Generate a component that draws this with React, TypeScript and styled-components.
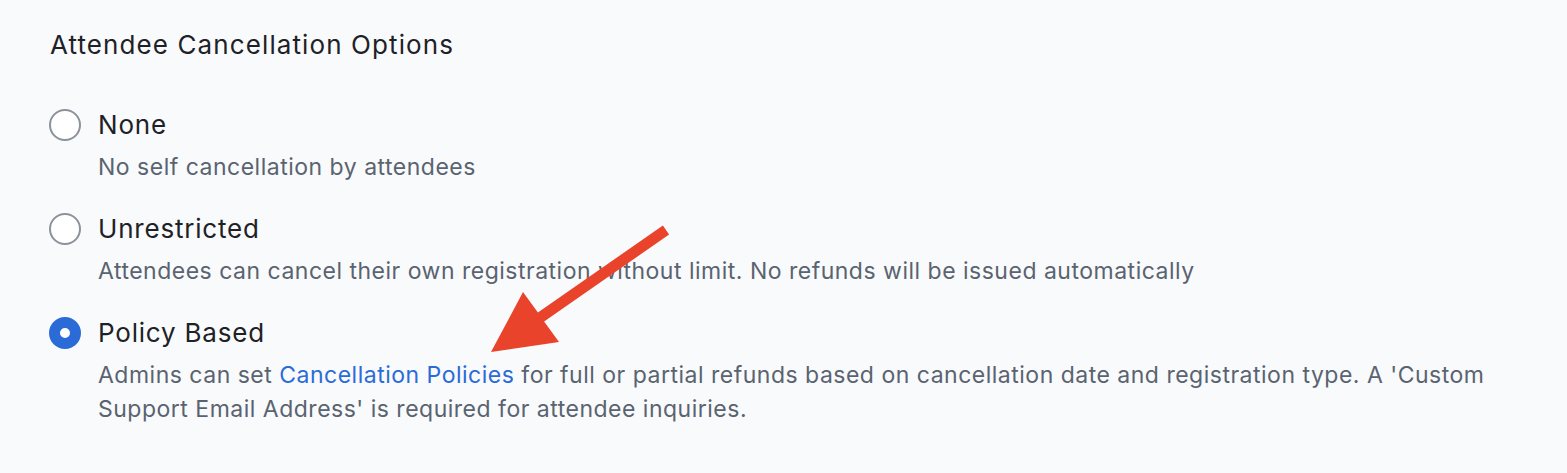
import styled, { createGlobalStyle } from 'styled-components';

const GlobalStyle = createGlobalStyle`
  html, body {
    margin: 0;
    padding: 0;
    background: #f9fafc;
  }
  body {
    font-family: Inter, "Noto Sans", "Liberation Sans", sans-serif;
    -webkit-font-smoothing: antialiased;
  }
`;

const StyledPage = styled.div`
  position: relative;
  width: 1567px;
  height: 473px;
  box-sizing: border-box;
  padding: 29px 50px 0 49px;
  background: #f9fafc;
  overflow: hidden;
`;

const StyledTitle = styled.h2`
  margin: 0 0 0 1px;
  font-size: 26px;
  font-weight: 400;
  line-height: 32px;
  letter-spacing: 1.1px;
  color: #1e2227;
`;

const StyledOptionList = styled.div`
  display: flex;
  flex-direction: column;
  gap: 29px;
  margin-top: 48px;
`;

const StyledOption = styled.label`
  display: grid;
  grid-template-columns: 32px 1fr;
  column-gap: 17px;
  row-gap: 9px;
  align-items: center;
  cursor: pointer;
`;

const StyledRadio = styled.span<{ checked: boolean }>`
  width: 32px;
  height: 32px;
  box-sizing: border-box;
  border-radius: 50%;
  background: #ffffff;
  border: ${({ checked }) => (checked ? '11px solid #2b6bd8' : '2px solid #8c929b')};
`;

const StyledLabel = styled.span`
  font-size: 26px;
  line-height: 32px;
  letter-spacing: 0.8px;
  color: #1e2227;
`;

const StyledDescription = styled.p`
  grid-column: 2;
  margin: 0;
  max-width: 1400px;
  font-size: 23px;
  line-height: 34px;
  letter-spacing: 0.5px;
  color: #5a6370;
`;

const StyledLink = styled.a`
  color: #2b6bd8;
  text-decoration: none;
`;

const StyledArrow = styled.svg`
  position: absolute;
  left: 0;
  top: 0;
  pointer-events: none;
`;

interface OptionProps {
  label: string;
  checked?: boolean;
  children: React.ReactNode;
}

function Option(props: OptionProps): JSX.Element {
  const { label, checked = false, children } = props;
  return (
    <StyledOption>
      <StyledRadio checked={checked} />
      <StyledLabel>{label}</StyledLabel>
      <StyledDescription>{children}</StyledDescription>
    </StyledOption>
  );
}

export default function App(): JSX.Element {
  return (
    <StyledPage>
      <GlobalStyle />
      <StyledTitle>Attendee Cancellation Options</StyledTitle>
      <StyledOptionList>
        <Option label="None">No self cancellation by attendees</Option>
        <Option label="Unrestricted">
          Attendees can cancel their own registration without limit. No refunds will be issued
          automatically
        </Option>
        <Option label="Policy Based" checked>
          Admins can set <StyledLink href="#">Cancellation Policies</StyledLink> for full or
          partial refunds based on cancellation date and registration type. A 'Custom Support
          Email Address' is required for attendee inquiries.
        </Option>
      </StyledOptionList>
      <StyledArrow width="1567" height="473" viewBox="0 0 1567 473">
        <polygon
          points="662.9,225.5 669.1,234.5 544.1,321.5 559,342 491,352 523,292 537.9,312.5"
          fill="#e9432b"
        />
      </StyledArrow>
    </StyledPage>
  );
}
